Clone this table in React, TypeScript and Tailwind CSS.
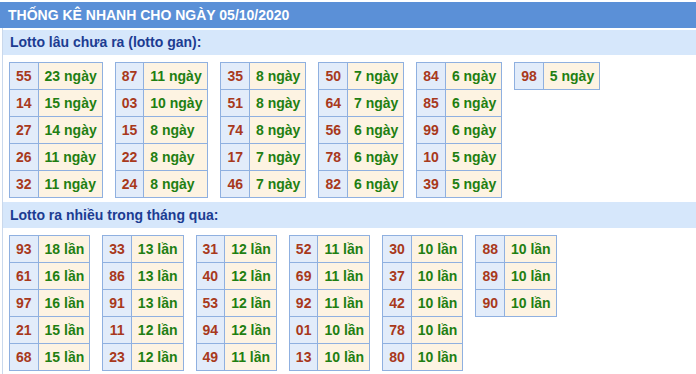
import React from 'react';

type Pair = [string, string];

const GAN: Pair[][] = [
  [['55', '23 ngày'], ['14', '15 ngày'], ['27', '14 ngày'], ['26', '11 ngày'], ['32', '11 ngày']],
  [['87', '11 ngày'], ['03', '10 ngày'], ['15', '8 ngày'], ['22', '8 ngày'], ['24', '8 ngày']],
  [['35', '8 ngày'], ['51', '8 ngày'], ['74', '8 ngày'], ['17', '7 ngày'], ['46', '7 ngày']],
  [['50', '7 ngày'], ['64', '7 ngày'], ['56', '6 ngày'], ['78', '6 ngày'], ['82', '6 ngày']],
  [['84', '6 ngày'], ['85', '6 ngày'], ['99', '6 ngày'], ['10', '5 ngày'], ['39', '5 ngày']],
  [['98', '5 ngày']],
];

const NHIEU: Pair[][] = [
  [['93', '18 lần'], ['61', '16 lần'], ['97', '16 lần'], ['21', '15 lần'], ['68', '15 lần']],
  [['33', '13 lần'], ['86', '13 lần'], ['91', '13 lần'], ['11', '12 lần'], ['23', '12 lần']],
  [['31', '12 lần'], ['40', '12 lần'], ['53', '12 lần'], ['94', '12 lần'], ['49', '11 lần']],
  [['52', '11 lần'], ['69', '11 lần'], ['92', '11 lần'], ['01', '10 lần'], ['13', '10 lần']],
  [['30', '10 lần'], ['37', '10 lần'], ['42', '10 lần'], ['78', '10 lần'], ['80', '10 lần']],
  [['88', '10 lần'], ['89', '10 lần'], ['90', '10 lần']],
];

function LottoTable({ rows }: { rows: Pair[] }) {
  return (
    <table className="border-collapse border border-[#8fb0e0] text-[14px] font-bold leading-4 self-start">
      <tbody>
        {rows.map(([num, val]) => (
          <tr key={num}>
            <td className="border border-[#8fb0e0] bg-[#e2ecfa] px-[6px] py-[5px] text-center text-[#a8391c]">{num}</td>
            <td className="border border-[#8fb0e0] bg-[#fdf3e2] pl-[6px] pr-[5px] py-[5px] text-left text-[#1f7f12]">{val}</td>
          </tr>
        ))}
      </tbody>
    </table>
  );
}

export default function App() {
  return (
    <div className="w-[696px] h-[374px] bg-white pt-[2px] overflow-hidden" style={{ fontFamily: '"Liberation Sans", Arial, sans-serif' }}>
      <div className="h-[26px] bg-[#5b90d7] pl-2 text-[14px] font-bold leading-[26px] text-white">
        THỐNG KÊ NHANH CHO NGÀY 05/10/2020
      </div>
      <div className="ml-[2px] border-l border-[#c9d8ec] pt-[2px]">
        <div className="h-[25px] bg-[#d6e7fb] pl-[7px] text-[14px] font-bold leading-[25px] text-[#1c3c92]">
          Lotto lâu chưa ra (lotto gan):
        </div>
        <div className="flex gap-3 pl-[6px] pt-[7px]">
          {GAN.map((t, i) => (
            <LottoTable key={i} rows={t} />
          ))}
        </div>
        <div className="mt-[4px] h-[26px] bg-[#d6e7fb] pl-[7px] text-[14px] font-bold leading-[26px] text-[#1c3c92]">
          Lotto ra nhiều trong tháng qua:
        </div>
        <div className="flex gap-3 pl-[6px] pt-[7px] pb-1">
          {NHIEU.map((t, i) => (
            <LottoTable key={i} rows={t} />
          ))}
        </div>
      </div>
    </div>
  );
}
